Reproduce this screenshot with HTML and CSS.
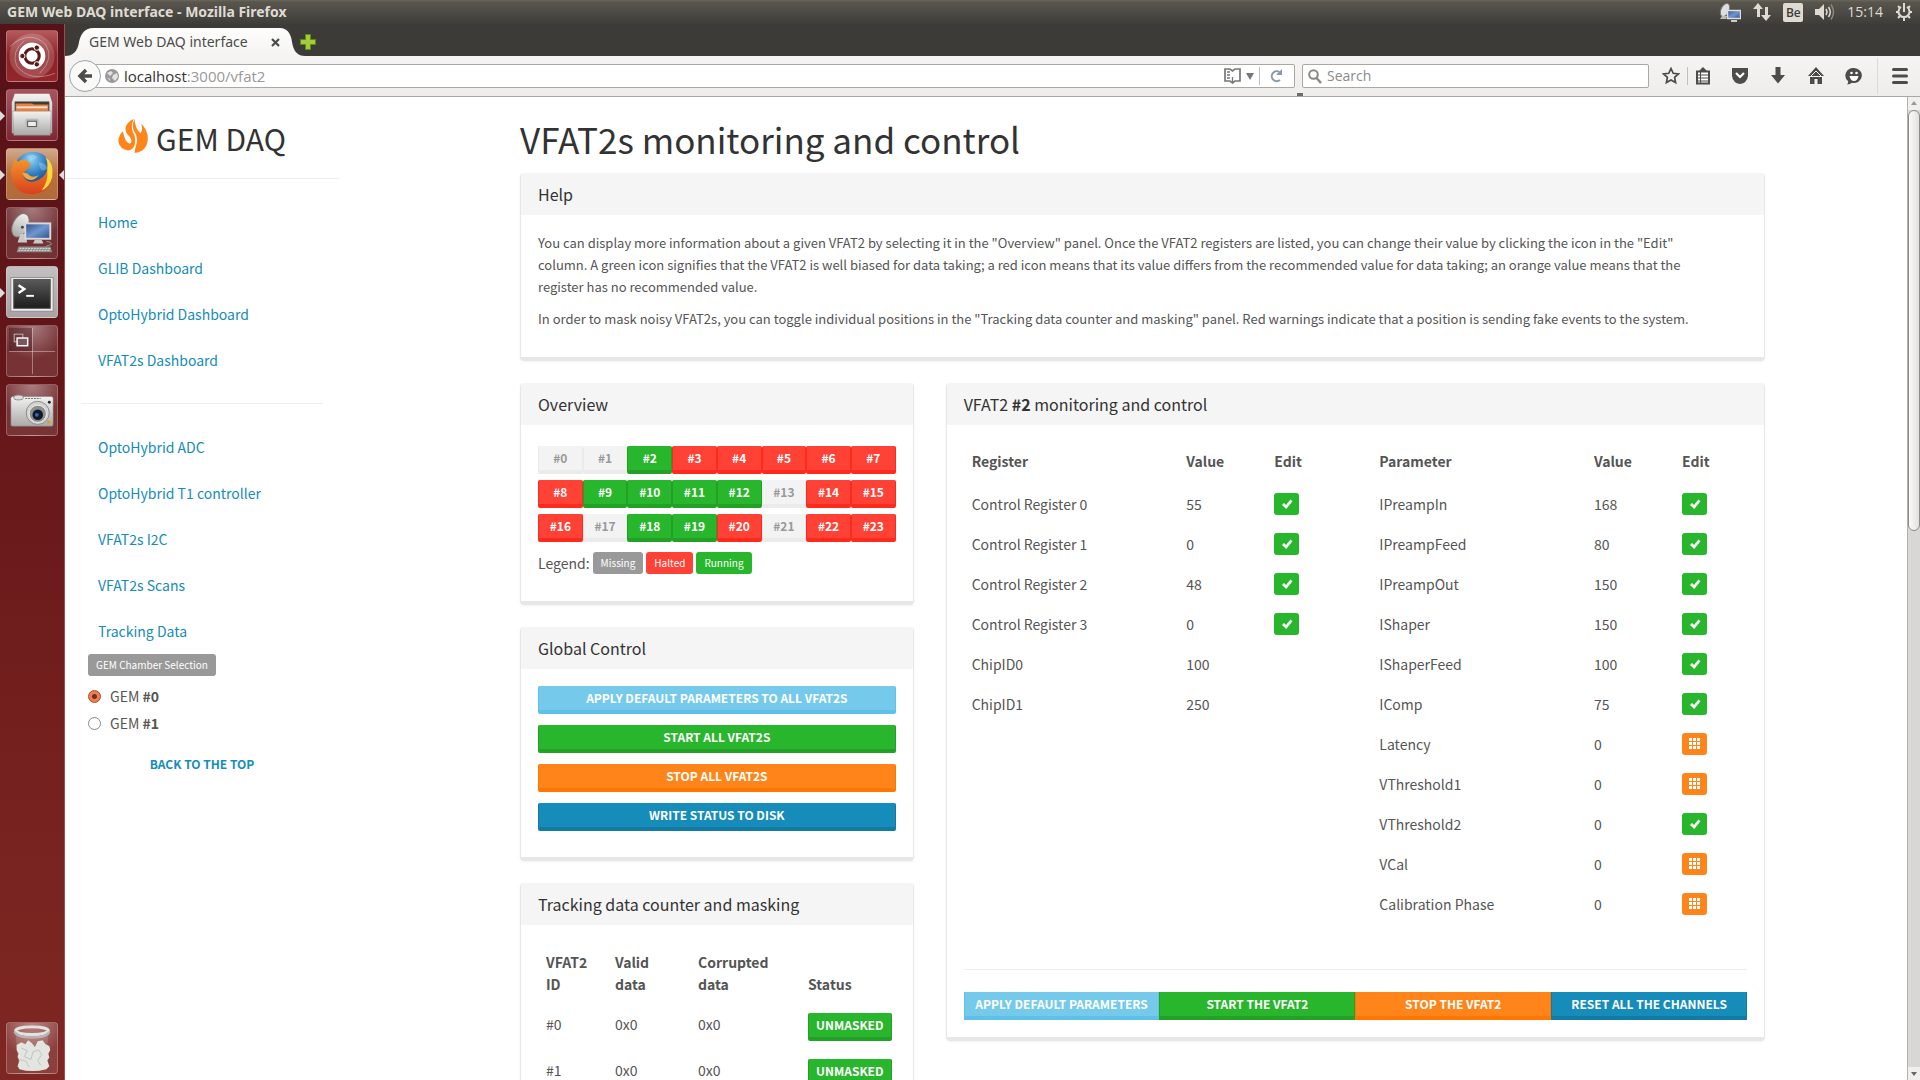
FILE: index.html
```html
<!DOCTYPE html>
<html lang="en">
<head>
<meta charset="utf-8">
<title>GEM Web DAQ interface</title>
<link rel="stylesheet" href="styles.css">
</head>
<body>
<svg class="defs" aria-hidden="true">
  <defs>
    <linearGradient id="metal" x1="0" y1="0" x2="0" y2="1"><stop offset="0" stop-color="#f2f2f0"/><stop offset="1" stop-color="#a9a9a7"/></linearGradient>
    <linearGradient id="screen" x1="0" y1="0" x2="1" y2="1"><stop offset="0" stop-color="#2c4f8c"/><stop offset=".5" stop-color="#6f97cf"/><stop offset="1" stop-color="#2c4f8c"/></linearGradient>
    <linearGradient id="dark" x1="0" y1="0" x2="0" y2="1"><stop offset="0" stop-color="#5a5a5a"/><stop offset="1" stop-color="#1c1c1c"/></linearGradient>
    <radialGradient id="globe" cx=".45" cy=".2" r=".8"><stop offset="0" stop-color="#8fd4f5"/><stop offset=".5" stop-color="#2b78bd"/><stop offset="1" stop-color="#0c2560"/></radialGradient>
    <linearGradient id="fox" x1="0" y1="0" x2="0" y2="1"><stop offset="0" stop-color="#f59a2c"/><stop offset="1" stop-color="#d9401c"/></linearGradient>
    <symbol id="check" viewBox="0 0 12 12"><path d="M1 7 3 5 5 7 9.500 1.500 11.500 3.200 5.200 11Z" fill="#fff"/></symbol>
    <symbol id="grid" viewBox="0 0 12 12"><path d="M0 0h3v3H0zM4 0h3v3H4zM8 0h3v3H8zM0 4h3v3H0zM4 4h3v3H4zM8 4h3v3H8zM0 8h3v3H0zM4 8h3v3H4zM8 8h3v3H8z" fill="#fff"/></symbol>
  </defs>
</svg>

<header class="panel">
  <span class="panel-title">GEM Web DAQ interface - Mozilla Firefox</span>
  <div class="tray">
    <svg width="22" height="20" viewBox="0 0 22 20"><ellipse cx="6" cy="8" rx="4" ry="7" transform="rotate(25 6 8)" fill="#dedede" stroke="#777"/><path d="M3 14l-2 3h6l1-3z" fill="#bbb"/><rect x="8.500" y="8.500" width="13" height="8" fill="url(#screen)" stroke="#ddd" stroke-width="1.500"/><path d="M12 18h6v2h-6z" fill="#ccc"/></svg>
    <svg width="18" height="18" viewBox="0 0 18 18" fill="#dfdbd2"><path d="M5 0l5 6H7v8H4V6H0zM13 18l5-6h-3V4h-3v8H8z"/></svg>
    <span class="keyboard">Be</span>
    <svg width="20" height="18" viewBox="0 0 20 18"><path d="M0 6h4l5-5v16l-5-5H0z" fill="#dfdbd2"/><path d="M11 6q2 3 0 6M13.500 4q3.500 5 0 10" fill="none" stroke="#dfdbd2" stroke-width="1.500"/><path d="M16 1.500q5 7.500 0 15" fill="none" stroke="#8b8880" stroke-width="1.500"/></svg>
    <time>15:14</time>
    <svg width="18" height="18" viewBox="0 0 18 18" fill="none" stroke="#dfdbd2"><path d="M6 4a5.500 5.500 0 1 0 6 0" stroke-width="2"/><path d="M9 0v9M1 9h2M15 9h2M3 3l2 2M15 3l-2 2M3 15l2-2M15 15l-2-2M9 15v3" stroke-width="2"/></svg>
  </div>
</header>

<div class="desktop">
  <nav class="launcher" aria-label="Launcher">
    <button class="tile tile-dash" aria-label="Dash"><svg viewBox="0 0 52 52"><circle cx="26" cy="26" r="19" fill="none" stroke="#fff" stroke-opacity=".18" stroke-width="9"/><path d="M3 16Q24-2 40 14Q50 28 34 44M50 44Q24 54 10 36Q4 22 18 10" fill="none" stroke="#fff" stroke-opacity=".35"/><circle cx="26" cy="26" r="14" fill="#fff"/><circle cx="26" cy="26" r="7.500" fill="none" stroke="#5a1a1c" stroke-width="3.200"/><g fill="#5a1a1c" stroke="#fff"><circle cx="16" cy="26" r="2.800"/><circle cx="31" cy="17.300" r="2.800"/><circle cx="31" cy="34.700" r="2.800"/></g></svg></button>
    <button class="tile tile-files running" aria-label="Files"><svg viewBox="0 0 52 52"><path d="M8 4h36l3 9v32H5V13z" fill="url(#metal)"/><path d="M8 12h36v10H8z" fill="#403a38"/><path d="M9 14h17l2 1h15v8H9z" fill="#e58244"/><path d="M10 17h32v2H10z" fill="#fbe3cd"/><path d="M6 22h40l-1 25H7z" fill="url(#metal)" stroke="#8f8f8e" stroke-width=".5"/><rect x="19" y="30" width="14" height="11" rx="2" fill="#b9b9b8"/><rect x="21.500" y="32.500" width="9" height="5.500" fill="#eee" stroke="#555"/></svg></button>
    <button class="tile tile-firefox running focused" aria-label="Firefox"><svg viewBox="0 0 52 52"><circle cx="27" cy="23" r="20" fill="url(#globe)"/><path d="M20 8q6-4 12 0q-3 4-8 3zM33 14q7 0 9 6q-5 5-8-1z" fill="#bfe3f5" fill-opacity=".35"/><path d="M40 8Q50 18 47 31Q43 46 27 47Q11 47 6 34Q1 22 9 10Q10 13 12 13Q17 9 22 13L25 17L21 21Q15 25 18 30Q23 37 33 32Q42 28 42 18Q43 13 40 8Z" fill="url(#fox)"/><path d="M40 8Q49 14 47 29Q44 40 36 43Q43 34 42 22Q43 14 40 8Z" fill="#ffd83a"/><path d="M16 25q5-1 8 3q4 2 9-1q-4 6-10 5q-5-1-7-7z" fill="#f7a83c"/></svg></button>
    <button class="tile tile-remote" aria-label="Remote desktop"><svg viewBox="0 0 52 52"><ellipse cx="14" cy="18" rx="8" ry="13" transform="rotate(25 14 18)" fill="url(#metal)" stroke="#777"/><circle cx="16" cy="20" r="1.500" fill="#444"/><path d="M14 27h5l2 9h-10z" fill="#c9c9c8"/><rect x="19" y="16" width="26" height="16" fill="url(#screen)" stroke="#d9d9d7" stroke-width="2"/><path d="M29 33h7l2 4H27z" fill="#c9c9c8"/><path d="M41 35q6 0 5 3q-6 1-6 3" fill="none" stroke="#999"/><path d="M12 40h33l2 6H10z" fill="#8d8d8b"/><path d="M13 42h32M12 44h33" stroke="#e4e4e2" stroke-dasharray="2 1"/></svg></button>
    <button class="tile tile-terminal running" aria-label="Terminal"><svg viewBox="0 0 52 52"><rect x="4" y="11" width="44" height="35" fill="#eee" stroke="#8d8b8c"/><rect x="7" y="13" width="38" height="30" fill="url(#dark)" stroke="#555"/><path d="M12 19l6 4-6 4" fill="none" stroke="#fff" stroke-width="2.500"/><path d="M20 30h8" stroke="#fff" stroke-width="2"/></svg></button>
    <button class="tile tile-spaces" aria-label="Workspaces"><svg viewBox="0 0 52 52"><path d="M2 2h24v24H2z" fill="#3d0d18" fill-opacity=".4"/><path d="M26.500 2v48M2 26.500h48" stroke="#fff" stroke-opacity=".4"/><rect x="7.500" y="8.500" width="9" height="8" fill="none" stroke="#bba"/><rect x="10.500" y="12.500" width="11" height="8" fill="#7b5560" stroke="#fff" stroke-width="1.500"/></svg></button>
    <button class="tile tile-camera" aria-label="Camera"><svg viewBox="0 0 52 52"><rect x="4" y="12" width="44" height="31" rx="2" fill="url(#metal)" stroke="#777" stroke-width=".5"/><ellipse cx="12" cy="13" rx="5" ry="2.500" fill="#ddd" stroke="#888"/><path d="M19 14h16" stroke="#666" stroke-dasharray="2 1"/><circle cx="32" cy="29" r="12" fill="#d3d3d1" stroke="#888"/><circle cx="32" cy="30" r="9" fill="#8e8e8c" stroke="#eee"/><circle cx="32" cy="31" r="5.500" fill="#10182c"/><circle cx="31" cy="31" r="2" fill="#3a68b0"/><circle cx="44" cy="18" r="1.500" fill="#222"/><path d="M42 37h3v3h-3z" fill="#e89a1c"/></svg></button>
    <button class="tile tile-trash" aria-label="Trash"><svg viewBox="0 0 52 52"><path d="M9 12l3 34q14 4 28 0l3-34z" fill="#fff" fill-opacity=".15"/><path d="M10 23l5-3 4 2 3-4 4 3 3 4 3-6 5-1 3 4 4 2 1 4-2 4 1 4-2 3 2 6-3 3q-15 4-28 0l-2-3 2-6-2-4 1-3-2-4z" fill="#e3e5e1"/><path d="M15 26l6 3-3 6 7 3 2-8 6-2 3 5-4 6 3 5M14 38l6 2 3 6" fill="none" stroke="#bfc3bd"/><ellipse cx="26" cy="8" rx="17" ry="4" fill="none" stroke="#e2e2e0" stroke-width="3"/><path d="M8 9q2 6 18 6t18-6" fill="none" stroke="#b5b5b3" stroke-width="2.500"/></svg></button>
  </nav>

  <div class="browser">
    <div class="tabs">
      <svg class="tab-shape" viewBox="0 0 240 32" preserveAspectRatio="none"><defs><linearGradient id="tabfill" x1="0" y1="0" x2="0" y2="1"><stop offset="0" stop-color="#fdfdfc"/><stop offset="1" stop-color="#f5f4f3"/></linearGradient></defs><path d="M0 32Q12 32 14 18Q17 4 28 4H215Q225 4 227 18Q229 32 240 32Z" fill="url(#tabfill)"/></svg>
      <div class="tab"><span>GEM Web DAQ interface</span><button class="plain" aria-label="Close tab"><svg width="9" height="9" viewBox="0 0 9 9"><path d="M1 1l7 7M8 1L1 8" stroke="#4c4c4c" stroke-width="2.200"/></svg></button></div>
      <button class="plain add" aria-label="New tab"><svg width="16" height="16" viewBox="0 0 16 16"><path d="M5.500.5h5v5h5v5h-5v5h-5v-5h-5v-5h5z" fill="#a3cb3a" stroke="#5d8a1a"/></svg></button>
    </div>
    <div class="toolbar">
      <button class="back" aria-label="Back"><svg width="16" height="16" viewBox="0 0 16 16"><path d="M9 2L3 8l6 6M3 8h12" fill="none" stroke="#4c4c4c" stroke-width="3.500"/></svg></button>
      <div class="field address">
        <svg width="14" height="14" viewBox="0 0 14 14"><circle cx="7" cy="7" r="7" fill="#999"/><path d="M2 4l4-2 2 2-3 3zM8 6l4-2 1 4-3 4-3-3zM2 8l3 2v2z" fill="#e2e2e2"/></svg>
        <div class="url" aria-label="Address"><b>localhost</b>:3000/vfat2</div>
        <svg width="17" height="18" viewBox="0 0 17 18"><path d="M1 2h5l2.500 2L11 2h5v12h-5l-2.500 2L6 14H1z" fill="#fff" stroke="#777" stroke-width="1.700"/><path d="M3 5h3M3 8h3M3 11h3M8.500 10v5" stroke="#777" stroke-width="1.300"/></svg>
        <svg width="8" height="8" viewBox="0 0 8 8"><path d="M0 1h8L4 8z" fill="#777"/></svg>
        <i class="divider"></i>
        <svg class="reload" width="13" height="14" viewBox="0 0 13 14"><path d="M10 11A5 5 0 1 1 9.500 3" fill="none" stroke="#8d9aa5" stroke-width="2"/><path d="M12 0v6H6z" fill="#8d9aa5"/></svg>
      </div>
      <div class="field search">
        <svg width="14" height="15" viewBox="0 0 14 15"><circle cx="5.500" cy="5.500" r="4.300" fill="none" stroke="#888" stroke-width="2"/><path d="M8.500 9l4.500 5" stroke="#888" stroke-width="2.500"/></svg>
        <input type="text" placeholder="Search" aria-label="Search">
      </div>
      <div class="tools">
        <div class="tools-bookmarks">
          <svg width="18" height="18" viewBox="0 0 18 18"><path d="M9 1.500l2.200 4.800 5.300.6-3.900 3.500 1 5.200L9 13l-4.600 2.600 1-5.200L1.500 6.900l5.300-.6z" fill="none" stroke="#4c4c4c" stroke-width="1.700"/></svg>
          <i class="divider"></i>
          <svg width="16" height="18" viewBox="0 0 16 18"><path d="M2 4.500h12v12H2z" fill="#fff" stroke="#4c4c4c" stroke-width="2"/><path d="M4 4l4-4 4 4z" fill="#4c4c4c"/><path d="M3 8h10M3 11h10M3 14h10M5.500 5v11" stroke="#4c4c4c"/></svg>
        </div>
        <svg width="18" height="18" viewBox="0 0 18 18"><path d="M1 1h16v8q-1 7-8 8q-7-1-8-8z" fill="#4c4c4c"/><path d="M5 6l4 4 4-4" fill="none" stroke="#fff" stroke-width="2.200"/></svg>
        <svg width="18" height="18" viewBox="0 0 18 18"><path d="M6.500 0h5v8H16l-7 8.500L2 8h4.500z" fill="#4c4c4c"/></svg>
        <svg width="18" height="18" viewBox="0 0 18 18"><path d="M9 0l8 9H1zM3 10h12v7H3z" fill="#4c4c4c"/><path d="M2 11l7-7 7 7" fill="none" stroke="#f3f2f1"/><path d="M7.500 12h3v5h-3z" fill="#f3f2f1"/></svg>
        <div class="tools-menu">
          <svg width="18" height="18" viewBox="0 0 18 18"><path d="M9 1a8 7.500 0 1 1-2 14.800Q5 17.500 2 17.500Q3.500 16 3 14A8 7.500 0 0 1 9 1z" fill="#4c4c4c"/><path d="M4.500 9h9q-1 5-4.500 5T4.500 9z" fill="#fff"/><circle cx="6.500" cy="6" r="1.300" fill="#fff"/><circle cx="11.500" cy="6" r="1.300" fill="#fff"/></svg>
          <i class="divider faint"></i>
          <svg width="16" height="18" viewBox="0 0 16 18"><path d="M1.500 2.500h13M1.500 9h13M1.500 15.500h13" stroke="#4c4c4c" stroke-width="3" stroke-linecap="round"/></svg>
        </div>
      </div>
    </div>

    <div class="viewport">
      <aside class="sidebar">
        <div class="logo">
          <svg width="30" height="34" viewBox="0 0 88 100" fill="#ff851b"><path d="M48 0Q40 20 46 34Q60 52 54 74Q50 88 48 99Q66 100 78 86Q90 72 87 48Q82 26 68 14Q74 32 66 42Q52 32 48 0Z"/><path d="M46 0Q24 10 22 28Q22 42 34 52Q42 62 38 70Q30 76 22 62Q18 52 14 36Q0 50 1 68Q6 90 30 93Q48 90 50 70Q52 52 44 40Q36 22 46 0Z"/></svg>
          <span>GEM DAQ</span>
        </div>
        <nav class="menu">
          <a href="#">Home</a>
          <a href="#">GLIB Dashboard</a>
          <a href="#">OptoHybrid Dashboard</a>
          <a href="#">VFAT2s Dashboard</a>
        </nav>
        <hr class="menu-rule">
        <nav class="menu">
          <a href="#">OptoHybrid ADC</a>
          <a href="#">OptoHybrid T1 controller</a>
          <a href="#">VFAT2s I2C</a>
          <a href="#">VFAT2s Scans</a>
          <a href="#">Tracking Data</a>
        </nav>
        <div class="chambers">
          <span class="label missing">GEM Chamber Selection</span>
          <label><input type="radio" name="gem" checked> <span>GEM <b>#0</b></span></label>
          <label><input type="radio" name="gem"> <span>GEM <b>#1</b></span></label>
        </div>
        <a class="to-top" href="#">BACK TO THE TOP</a>
      </aside>

      <main class="page">
        <h1>VFAT2s monitoring and control</h1>
        <section class="card help">
          <h2>Help</h2>
          <div class="body">
            <p>You can display more information about a given VFAT2 by selecting it in the "Overview" panel. Once the VFAT2 registers are listed, you can change their value by clicking the icon in the "Edit"<br>column. A green icon signifies that the VFAT2 is well biased for data taking; a red icon means that its value differs from the recommended value for data taking; an orange value means that the<br>register has no recommended value.</p>
            <p>In order to mask noisy VFAT2s, you can toggle individual positions in the "Tracking data counter and masking" panel. Red warnings indicate that a position is sending fake events to the system.</p>
          </div>
        </section>

        <div class="left">
          <section class="card">
            <h2>Overview</h2>
            <div class="body overview">
              <div class="chips">
                <button class="btn off">#0</button><button class="btn off">#1</button><button class="btn green">#2</button><button class="btn red">#3</button><button class="btn red">#4</button><button class="btn red">#5</button><button class="btn red">#6</button><button class="btn red">#7</button>
                <button class="btn red">#8</button><button class="btn green">#9</button><button class="btn green">#10</button><button class="btn green">#11</button><button class="btn green">#12</button><button class="btn off">#13</button><button class="btn red">#14</button><button class="btn red">#15</button>
                <button class="btn red">#16</button><button class="btn off">#17</button><button class="btn green">#18</button><button class="btn green">#19</button><button class="btn red">#20</button><button class="btn off">#21</button><button class="btn red">#22</button><button class="btn red">#23</button>
              </div>
              <div class="legend">Legend: <span class="label missing">Missing</span><span class="label halted">Halted</span><span class="label ok">Running</span></div>
            </div>
          </section>
          <section class="card">
            <h2>Global Control</h2>
            <div class="body stack">
              <button class="btn sky">APPLY DEFAULT PARAMETERS TO ALL VFAT2S</button>
              <button class="btn green">START ALL VFAT2S</button>
              <button class="btn orange">STOP ALL VFAT2S</button>
              <button class="btn blue">WRITE STATUS TO DISK</button>
            </div>
          </section>
          <section class="card">
            <h2>Tracking data counter and masking</h2>
            <div class="body">
              <table class="tracking">
                <thead><tr><th class="w-id">VFAT2<br>ID</th><th class="w-valid">Valid<br>data</th><th class="w-bad">Corrupted<br>data</th><th>Status</th></tr></thead>
                <tbody>
                  <tr><td>#0</td><td>0x0</td><td>0x0</td><td><button class="btn green">UNMASKED</button></td></tr>
                  <tr><td>#1</td><td>0x0</td><td>0x0</td><td><button class="btn green">UNMASKED</button></td></tr>
                </tbody>
              </table>
            </div>
          </section>
        </div>

        <div class="right">
          <section class="card">
            <h2>VFAT2 <b>#2</b> monitoring and control</h2>
            <div class="body">
              <div class="tables">
                <table class="registers">
                  <thead><tr><th>Register</th><th class="w-value">Value</th><th class="w-edit">Edit</th></tr></thead>
                  <tbody>
                    <tr><td>Control Register 0</td><td>55</td><td><button class="edit ok" aria-label="Edit"><svg><use href="#check"/></svg></button></td></tr>
                    <tr><td>Control Register 1</td><td>0</td><td><button class="edit ok" aria-label="Edit"><svg><use href="#check"/></svg></button></td></tr>
                    <tr><td>Control Register 2</td><td>48</td><td><button class="edit ok" aria-label="Edit"><svg><use href="#check"/></svg></button></td></tr>
                    <tr><td>Control Register 3</td><td>0</td><td><button class="edit ok" aria-label="Edit"><svg><use href="#check"/></svg></button></td></tr>
                    <tr><td>ChipID0</td><td>100</td><td></td></tr>
                    <tr><td>ChipID1</td><td>250</td><td></td></tr>
                  </tbody>
                </table>
                <table class="registers">
                  <thead><tr><th>Parameter</th><th class="w-value">Value</th><th class="w-edit">Edit</th></tr></thead>
                  <tbody>
                    <tr><td>IPreampIn</td><td>168</td><td><button class="edit ok" aria-label="Edit"><svg><use href="#check"/></svg></button></td></tr>
                    <tr><td>IPreampFeed</td><td>80</td><td><button class="edit ok" aria-label="Edit"><svg><use href="#check"/></svg></button></td></tr>
                    <tr><td>IPreampOut</td><td>150</td><td><button class="edit ok" aria-label="Edit"><svg><use href="#check"/></svg></button></td></tr>
                    <tr><td>IShaper</td><td>150</td><td><button class="edit ok" aria-label="Edit"><svg><use href="#check"/></svg></button></td></tr>
                    <tr><td>IShaperFeed</td><td>100</td><td><button class="edit ok" aria-label="Edit"><svg><use href="#check"/></svg></button></td></tr>
                    <tr><td>IComp</td><td>75</td><td><button class="edit ok" aria-label="Edit"><svg><use href="#check"/></svg></button></td></tr>
                    <tr><td>Latency</td><td>0</td><td><button class="edit warn" aria-label="Edit"><svg><use href="#grid"/></svg></button></td></tr>
                    <tr><td>VThreshold1</td><td>0</td><td><button class="edit warn" aria-label="Edit"><svg><use href="#grid"/></svg></button></td></tr>
                    <tr><td>VThreshold2</td><td>0</td><td><button class="edit ok" aria-label="Edit"><svg><use href="#check"/></svg></button></td></tr>
                    <tr><td>VCal</td><td>0</td><td><button class="edit warn" aria-label="Edit"><svg><use href="#grid"/></svg></button></td></tr>
                    <tr><td>Calibration Phase</td><td>0</td><td><button class="edit warn" aria-label="Edit"><svg><use href="#grid"/></svg></button></td></tr>
                  </tbody>
                </table>
              </div>
              <hr class="card-rule">
              <div class="group">
                <button class="btn sky">APPLY DEFAULT PARAMETERS</button>
                <button class="btn green">START THE VFAT2</button>
                <button class="btn orange">STOP THE VFAT2</button>
                <button class="btn blue">RESET ALL THE CHANNELS</button>
              </div>
            </div>
          </section>
        </div>
      </main>

      <div class="scrollbar" aria-hidden="true">
        <svg width="12" height="13" viewBox="0 0 12 13"><path d="M3 8l3-4 3 4z" fill="#999"/></svg>
        <div class="track"><div class="thumb"></div></div>
        <svg width="12" height="13" viewBox="0 0 12 13"><path d="M3 5l3 4 3-4z" fill="#666"/></svg>
      </div>
    </div>
  </div>
</div>
</body>
</html>
```
FILE: styles.css
```css
* { box-sizing: border-box; }

body {
  margin: 0;
  height: 100vh;
  display: flex;
  flex-direction: column;
  overflow: hidden;
  background: #fff;
  color: #555;
  font: 14px/22px "Noto Sans CJK SC", sans-serif;
}

button { font: inherit; border: 0; padding: 0; background: none; cursor: pointer; }
a { color: #158cba; text-decoration: none; }
svg { flex: none; display: block; }
.defs { position: absolute; width: 0; height: 0; }

/* Desktop panel */
.panel {
  flex: none;
  height: 24px;
  display: flex;
  align-items: center;
  justify-content: space-between;
  padding: 0 7px;
  background: linear-gradient(#6a675a, #59564e 2px, #3e3d39);
  color: #dfdbd2;
  font-family: "Noto Sans", sans-serif;
}
.panel-title { font-size: 14px; font-weight: 700; }
.tray { display: flex; align-items: center; gap: 12px; font-family: "Open Sans", sans-serif; }
.keyboard {
  width: 20px;
  border-radius: 2px;
  background: #dfdbd2;
  color: #3c3b37;
  font-size: 12px;
  font-weight: 600;
  line-height: 19px;
  text-align: center;
}

.desktop { flex: 1; min-height: 0; display: flex; }

/* Launcher */
.launcher {
  flex: none;
  width: 65px;
  display: flex;
  flex-direction: column;
  gap: 7px;
  padding: 6px;
  border-right: 1px solid #98504d;
  background: linear-gradient(#561217, #651619 35%, #7b2521 85%, #7d2622);
}
.tile {
  position: relative;
  width: 52px;
  height: 52px;
  border-radius: 4px;
  border: 1px solid rgba(255, 255, 255, .22);
  background: radial-gradient(circle at 50% 0, rgba(255, 255, 255, .45), rgba(255, 255, 255, .12) 60%);
}
.tile svg { width: 50px; height: 50px; }
.tile-dash { background: linear-gradient(#b55a5c, #8b2327 50%, #93262a); }
.tile-files { background: linear-gradient(#a65560, #7d2733); }
.tile-firefox { background: linear-gradient(#cfa98e, #b9713b 50%, #b06a3a); }
.tile-terminal { background: linear-gradient(#c4bfc1, #a9a2a5); }
.tile-trash { margin-top: auto; }
.running::before,
.focused::after {
  content: "";
  position: absolute;
  top: 21px;
  border: 5px solid transparent;
}
.running::before { left: -7px; border-left-color: #ddd; border-right: 0; }
.focused::after { right: -7px; border-right-color: #ddd; border-left: 0; }

/* Browser chrome */
.browser {
  flex: 1;
  min-width: 0;
  display: flex;
  flex-direction: column;
}
.tabs {
  position: relative;
  flex: none;
  height: 32px;
  display: flex;
  align-items: center;
  gap: 20px;
  padding-top: 4px;
  background: #3c3b37;
  font-family: "Noto Sans", sans-serif;
  color: #4c4c4c;
}
.tab-shape { position: absolute; left: 0; top: 0; width: 240px; height: 32px; }
.tab { position: relative; width: 215px; padding-left: 24px; display: flex; align-items: center; justify-content: space-between; }
.toolbar {
  flex: none;
  height: 41px;
  display: flex;
  align-items: center;
  padding: 0 12px 0 4px;
  border-bottom: 1px solid #aca79f;
  background: linear-gradient(#f5f4f3, #eeedeb);
  font-family: "Open Sans", sans-serif;
}
.back {
  position: relative;
  width: 32px;
  height: 32px;
  margin-right: -6px;
  border: 1px solid #98a3ae;
  border-radius: 50%;
  background: #f9f9f8;
  display: flex;
  align-items: center;
  justify-content: center;
}
.field {
  height: 24px;
  display: flex;
  align-items: center;
  border: 1px solid #aca79f;
  border-radius: 2px;
  background: #fff;
}
.address { flex: 1; padding: 0 11px 0 9px; gap: 5px; color: #999; }
.url { flex: 1; font-size: 15px; }
.url b { font-weight: 400; color: #333; }
.reload { margin-left: 5px; }
.search { position: relative; width: 347px; margin: 0 13px 0 7px; padding-left: 5px; gap: 5px; }
.search::before {
  content: "";
  position: absolute;
  left: -6px;
  bottom: -9px;
  width: 6px;
  height: 3px;
  background: #6b6b6b;
}
.search input { flex: 1; min-width: 0; border: 0; padding: 0; background: none; font: inherit; outline: 0; }
.search input::placeholder { color: #8a8a8a; }
.tools, .tools-bookmarks, .tools-menu { display: flex; align-items: center; }
.tools { gap: 20px; }
.tools-bookmarks { gap: 7px; }
.tools-menu { gap: 14px; }
.divider { width: 1px; height: 18px; background: #b9c0c6; }
.faint { height: 36px; background: #dcdad7; }

.viewport { flex: 1; min-height: 0; display: flex; overflow: hidden; }

/* Sidebar */
.sidebar { flex: none; width: 274px; }
.logo {
  height: 82px;
  display: flex;
  justify-content: center;
  gap: 8px;
  padding-top: 22px;
  border-bottom: 1px solid #eee;
  color: #333;
  font-size: 30px;
  line-height: 38px;
}
.menu { display: flex; flex-direction: column; gap: 24px; padding: 32px 33px 0; }
hr { border: 0; border-top: 1px solid #eee; }
.menu-rule { margin: 32px 16px 0; }
.chambers { display: flex; flex-direction: column; align-items: flex-start; gap: 5px; padding: 12px 23px 0; }
.chambers label { display: flex; align-items: center; gap: 9px; }
.chambers .label { margin-bottom: 4px; }
input[type="radio"] {
  appearance: none;
  width: 13px;
  height: 13px;
  margin: 0;
  border: 1px solid #888;
  border-radius: 50%;
  background: #fff;
}
input[type="radio"]:checked { border-color: #a34f2f; background: radial-gradient(circle, #6b3320 2px, #f07c50 3px); }
.to-top { display: block; margin-top: 19px; text-align: center; font-size: 12px; font-weight: 700; }

/* Page */
.page {
  flex: 1;
  min-width: 0;
  display: grid;
  grid-template-columns: repeat(12, minmax(0, 1fr));
  grid-template-rows: 76px auto auto;
  column-gap: 32px;
  align-items: start;
  align-content: start;
  padding: 0 142px 0 181px;
}
h1 { grid-column: 1 / -1; margin: 0; padding-top: 20px; color: #333; font-size: 35px; font-weight: 400; line-height: 43px; }
.help { grid-column: 1 / -1; }
.left { grid-column: span 4; }
.right { grid-column: span 8; }
.card {
  margin-bottom: 22px;
  border: 1px solid #e7e7e7;
  border-width: 0 1px 4px;
  border-radius: 4px;
  box-shadow: 0 1px 3px rgba(0, 0, 0, .05);
}
.card h2 {
  margin: 0;
  padding: 10px 17px;
  border-radius: 4px 4px 0 0;
  background: #f5f5f5;
  color: #333;
  font-size: 16px;
  font-weight: 400;
  line-height: 22px;
}
.body { padding: 17px; }
.help p { margin: 0 0 10px; font-size: 13px; }

.label {
  padding: 0 8px;
  border-radius: 3px;
  color: #fff;
  font-size: 10px;
  line-height: 22px;
}
.missing { background: #999; }
.halted { background: #ff4136; }
.ok { background: #28b62c; }
.warn { background: #ff851b; }

.btn {
  height: 28px;
  padding: 0 7px;
  border: solid;
  border-width: 0 1px 4px;
  border-radius: 2px;
  color: #fff;
  font-size: 12px;
  font-weight: 700;
  line-height: 22px;
  white-space: nowrap;
}
.off { background: #f3f3f3; border-color: #ebebeb; color: #999; }
.green { background: #28b62c; border-color: #23a127; }
.red { background: #ff4136; border-color: #ff291c; }
.sky { background: #75caeb; border-color: #5fc1e8; }
.orange { background: #ff851b; border-color: #ff7701; }
.blue { background: #158cba; border-color: #127ba3; }

.overview { padding: 21px 17px 27px; }
.chips { display: grid; grid-template-columns: repeat(8, minmax(0, 1fr)); row-gap: 6px; }
.chips .btn { padding: 0; }
.legend { display: flex; gap: 3px; margin-top: 10px; }
.stack { display: flex; flex-direction: column; gap: 11px; padding-bottom: 26px; }

table { width: 100%; border-collapse: collapse; table-layout: fixed; }
th, td { padding: 8px; text-align: left; vertical-align: top; }
.tracking th { padding: 9px 8px 10px; vertical-align: bottom; }
.tracking td { height: 46px; }
.w-id { width: 69px; }
.w-valid { width: 83px; }
.w-bad { width: 110px; }
.w-value { width: 88px; }
.w-edit { width: 73px; }
.tables { display: grid; grid-template-columns: 1fr 1fr; column-gap: 32px; align-items: start; }
.registers thead tr { height: 43px; }
.registers td { height: 40px; }
.edit { width: 25px; height: 22px; border-radius: 3px; display: flex; align-items: center; justify-content: center; }
.edit svg { width: 12px; height: 12px; }
.card-rule { margin: 44px 0 22px; }
.group { display: grid; grid-template-columns: repeat(4, minmax(0, 1fr)); }
.group .btn { border-radius: 0; padding: 0; }

/* Scrollbar */
.scrollbar { flex: none; width: 13px; display: flex; flex-direction: column; border-left: 1px solid #b5b2ad; background: #f0efee; }
.track { flex: 1; background: #d9d7d5; }
.thumb { height: 44%; border: 1px solid #8e8b86; border-radius: 7px; background: linear-gradient(90deg, #fafafa, #e2e1df); }
```
